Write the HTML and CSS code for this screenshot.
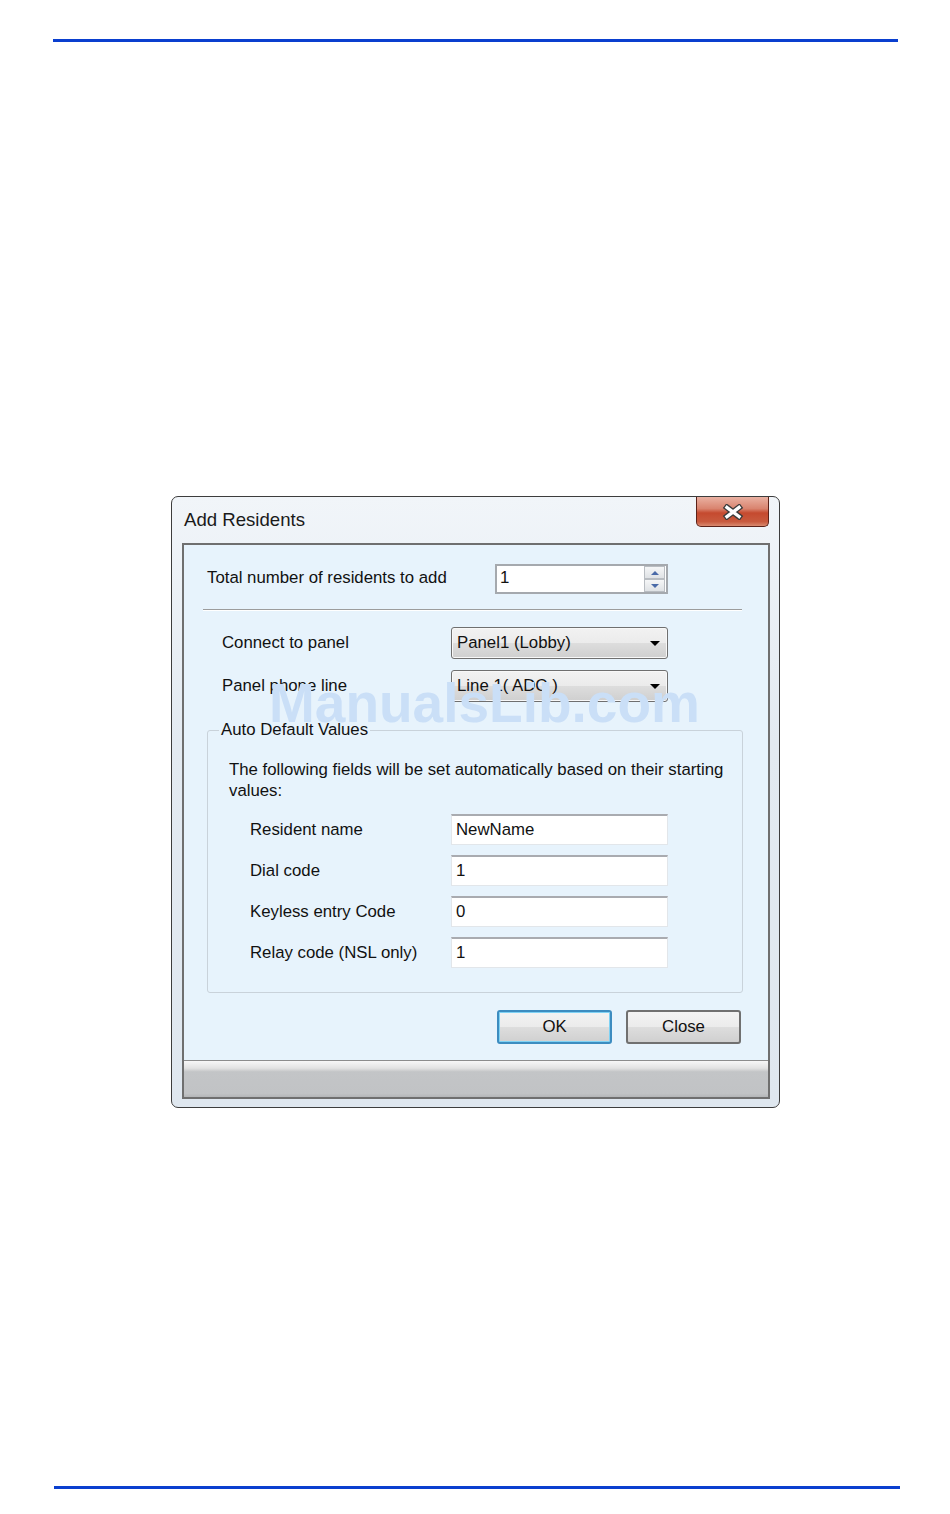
FILE: index.html
```html
<!DOCTYPE html>
<html lang="en">
<head>
    <meta charset="UTF-8">
    <meta name="viewport" content="width=device-width, initial-scale=1.0">
    <title>Add Residents</title>
    <link rel="stylesheet" href="styles.css">
</head>
<body>
    <div class="rule rule-top"></div>

    <div class="stage">
        <div class="window">

            <!-- Barra de titulo -->
            <div class="titlebar">
                <span class="title">Add Residents</span>
                <div class="close-btn">
                    <svg width="22" height="16" viewBox="-11 -8 22 16">
                        <path d="M-6,-4.5 L6,4.5 M-6,4.5 L6,-4.5" stroke="#3b3b3b" stroke-width="6" stroke-linecap="square"/>
                        <path d="M-6,-4.5 L6,4.5 M-6,4.5 L6,-4.5" stroke="#ffffff" stroke-width="3.4" stroke-linecap="square"/>
                    </svg>
                </div>
            </div>

            <div class="client">
                <div class="row-total">
                    <span class="label-total">Total number of residents to add</span>
                    <div class="spinner">
                        <span class="spin-value">1</span>
                        <div class="spin-btns">
                            <span class="spin-up"></span>
                            <span class="spin-down"></span>
                        </div>
                    </div>
                </div>

                <div class="separator"></div>

                <div class="row-select">
                    <span class="label-select">Connect to panel</span>
                    <div class="combo"><span>Panel1 (Lobby)</span><span class="combo-arrow"></span></div>
                </div>
                <div class="row-select">
                    <span class="label-select">Panel phone line</span>
                    <div class="combo"><span>Line 1( ADC )</span><span class="combo-arrow"></span></div>
                </div>

                <!-- Valores automaticos -->
                <fieldset class="group">
                    <legend>Auto Default Values</legend>
                    <p class="group-text">The following fields will be set automatically based on their starting values:</p>
                    <div class="field-row">
                        <span class="label-field">Resident name</span>
                        <div class="textbox">NewName</div>
                    </div>
                    <div class="field-row">
                        <span class="label-field">Dial code</span>
                        <div class="textbox">1</div>
                    </div>
                    <div class="field-row">
                        <span class="label-field">Keyless entry Code</span>
                        <div class="textbox">0</div>
                    </div>
                    <div class="field-row">
                        <span class="label-field">Relay code (NSL only)</span>
                        <div class="textbox">1</div>
                    </div>
                </fieldset>

                <div class="buttons">
                    <div class="btn btn-default">OK</div>
                    <div class="btn">Close</div>
                </div>

                <div class="statusbar"></div>
            </div>

            <div class="watermark">ManualsLib.com</div>
        </div>
    </div>

    <div class="rule rule-bottom"></div>
</body>
</html>
```

FILE: styles.css
```css
body {
    margin: 0;
    padding: 0;
    background-color: #fff;
    font-family: "Liberation Sans", Arial, sans-serif;
    color: #111;
}
.rule {
    height: 3px;
    background-color: #0a3fcf;
}
.rule-top {
    margin: 39px 0 0 53px;
    width: 845px;
}
.rule-bottom {
    margin: 378px 0 0 54px;
    width: 846px;
}
.stage {
    padding: 454px 0 0 171px;
}
.window {
    position: relative;
    width: 609px;
    box-sizing: border-box;
    border: 1px solid #3d3d3d;
    border-radius: 7px;
    background: linear-gradient(#f1f5f9, #e3eaf1 40%, #dfe7ef);
    padding: 0 9px 8px 10px;
}
.titlebar {
    height: 46px;
    display: flex;
    align-items: flex-start;
    justify-content: space-between;
}
.title {
    font-family: "Liberation Sans", Arial, sans-serif;
    font-size: 18.6px;
    margin: 12px 0 0 2px;
    color: #1a1a1a;
}
.close-btn {
    width: 73px;
    height: 30px;
    box-sizing: border-box;
    border: 1px solid #5b2118;
    border-top: none;
    border-radius: 0 0 5px 5px;
    background: linear-gradient(#eab1a2, #d9846f 40%, #c54a2f 55%, #c85a3e 85%, #d98a70);
    display: flex;
    align-items: center;
    justify-content: center;
    margin-right: 1px;
}
.client {
    width: 588px;
    box-sizing: border-box;
    border: 2px solid #6f6f6f;
    background-color: #e7f3fc;
    font-size: 16.8px;
}
.row-total {
    display: flex;
    align-items: center;
    padding: 19px 0 0 23px;
}
.label-total {
    width: 288px;
    margin-top: -3px;
}
.spinner {
    width: 173px;
    height: 30px;
    box-sizing: border-box;
    border: 2px solid #a5a9ae;
    background: #fff;
    display: flex;
    align-items: center;
    justify-content: space-between;
}
.spin-value {
    padding-left: 3px;
    margin-top: -2px;
}
.spin-btns {
    display: flex;
    flex-direction: column;
    width: 21px;
    height: 26px;
    margin-right: 1px;
}
.spin-up, .spin-down {
    flex: 1;
    box-sizing: border-box;
    border: 1px solid #b9bdc2;
    background: linear-gradient(#f5f6f7, #dfe2e5);
    display: flex;
    align-items: center;
    justify-content: center;
}
.spin-up::after, .spin-down::after {
    content: "";
    border-left: 4px solid transparent;
    border-right: 4px solid transparent;
}
.spin-up::after {
    border-bottom: 4px solid #4a6aa8;
}
.spin-down::after {
    border-top: 4px solid #4a6aa8;
}
.separator {
    margin: 15px 0 0 19px;
    width: 539px;
    height: 1px;
    background-color: #9c9c9c;
    border-bottom: 1px solid #fff;
}
.row-select {
    display: flex;
    align-items: center;
    padding-left: 38px;
    margin-top: 16px;
}
.row-select + .row-select {
    margin-top: 11px;
}
.label-select {
    width: 229px;
}
.combo {
    width: 217px;
    height: 32px;
    box-sizing: border-box;
    border: 1px solid #6f6f6f;
    border-radius: 3px;
    box-shadow: inset 0 0 0 1px #f8f8f8;
    background: linear-gradient(#f2f2f2, #ebebeb 50%, #dddddd 51%, #cfcfcf);
    display: flex;
    align-items: center;
    justify-content: space-between;
    padding: 0 7px 0 5px;
}
.combo-arrow {
    border-left: 5px solid transparent;
    border-right: 5px solid transparent;
    border-top: 5px solid #000;
}
.group {
    margin: 18px 0 0 23px;
    padding: 0;
    width: 536px;
    box-sizing: border-box;
    border: 1px solid #c9d2da;
    border-radius: 3px;
    padding-bottom: 24px;
}
.group legend {
    margin-left: 11px;
    padding: 0 2px;
    line-height: 20px;
}
.group-text {
    margin: 19px 0 13px 21px;
    width: 505px;
    line-height: 21px;
}
.field-row {
    display: flex;
    align-items: center;
    padding-left: 42px;
    margin-top: 10px;
}
.group-text + .field-row {
    margin-top: 0;
}
.label-field {
    width: 201px;
}
.textbox {
    width: 217px;
    height: 31px;
    box-sizing: border-box;
    background: #fff;
    border: 1px solid #e2e6ea;
    border-top: 2px solid #a9abb0;
    padding: 3px 0 0 4px;
    line-height: 22px;
}
.buttons {
    display: flex;
    justify-content: flex-end;
    gap: 14px;
    padding-right: 27px;
    margin-top: 17px;
}
.btn {
    width: 115px;
    height: 34px;
    box-sizing: border-box;
    border: 2px solid #707070;
    border-radius: 3px;
    background: linear-gradient(#f3f3f3, #ebebeb 50%, #dddddd 51%, #d0d0d0);
    display: flex;
    align-items: center;
    justify-content: center;
}
.btn-default {
    border-color: #3c8cc0;
    box-shadow: inset 0 0 0 1px #7fd2f4;
}
.statusbar {
    margin-top: 16px;
    height: 36px;
    border-top: 1px solid #8c8c8c;
    background: linear-gradient(#f7f7f7, #e2e2e2 20%, #c3c5c7 30%, #c1c3c5 90%, #b4b6b8);
}
.watermark {
    position: absolute;
    left: 97px;
    top: 179px;
    font-family: "Liberation Sans", Arial, sans-serif;
    font-weight: bold;
    font-size: 55px;
    line-height: 1;
    color: #cadff7;
    white-space: nowrap;
}
```
